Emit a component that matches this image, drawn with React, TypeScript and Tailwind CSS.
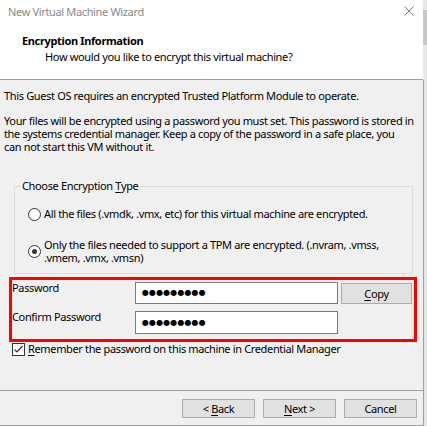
import React from "react";

const Btn = ({ children }: { children: React.ReactNode }) => (
  <div className="w-[73px] h-[19px] flex items-center justify-center bg-[#e1e1e1] border border-[#adadad] leading-none">
    <span>{children}</span>
  </div>
);

const Dots = () => (
  <span className="pl-[6px] font-['DejaVu_Sans'] text-[8px] tracking-[0.1px] leading-none">●●●●●●●●●</span>
);

export default function App() {
  return (
    <div className="w-[427px] h-[426px] flex bg-[#f0f0f0] text-black text-[11px] tracking-[-0.35px] font-['Noto_Sans',sans-serif] overflow-hidden">
      <div className="w-[423px] flex flex-col">
        {/* header */}
        <div className="h-[80px] bg-white border-b border-[#a0a0a0] flex flex-col">
          <div className="h-[24px] flex items-center justify-between pl-[8px] pr-[9px]">
            <span className="text-[#8a8a8a]">New Virtual Machine Wizard</span>
            <svg width="10" height="10" viewBox="0 0 10 10" className="mt-[-2px]">
              <path d="M0.5 0.5 L9.5 9.5 M9.5 0.5 L0.5 9.5" stroke="#777" strokeWidth="1" fill="none" />
            </svg>
          </div>
          <div className="mt-[9px] pl-[22px] leading-[16px] font-bold">Encryption Information</div>
          <div className="pl-[45px] leading-[16px]">How would you like to encrypt this virtual machine?</div>
        </div>

        {/* body */}
        <div className="mt-[8px] pl-[4px] leading-[16px]">This Guest OS requires an encrypted Trusted Platform Module to operate.</div>
        <div className="mt-[10px] pl-[4px] leading-[13px] whitespace-nowrap">
          Your files will be encrypted using a password you must set. This password is stored in
          <br />
          the systems credential manager. Keep a copy of the password in a safe place, you
          <br />
          can not start this VM without it.
        </div>

        <fieldset className="mt-[25px] ml-[14px] w-[399px] border border-[#dcdcdc] pb-[9px]">
          <legend className="ml-[5px] px-[2px] leading-[16px]">
            Choose Encryption <u className="underline-offset-2">T</u>ype
          </legend>
          <div className="mt-[12px] pl-[13px] flex items-center gap-[3px] leading-[16px]">
            <span className="w-[13px] h-[13px] rounded-full border border-[#333] bg-white shrink-0" />
            <span>All the files (.vmdk, .vmx, etc) for this virtual machine are encrypted.</span>
          </div>
          <div className="mt-[16px] pl-[13px] flex items-center gap-[3px] leading-[13px]">
            <span className="w-[13px] h-[13px] rounded-full border border-[#333] bg-white shrink-0 flex items-center justify-center">
              <span className="w-[5px] h-[5px] rounded-full bg-[#333]" />
            </span>
            <span className="pr-[20px]">Only the files needed to support a TPM are encrypted. (.nvram, .vmss, .vmem, .vmx, .vmsn)</span>
          </div>
        </fieldset>

        {/* highlighted password fields */}
        <div className="mt-[3px] ml-[9px] w-[408px] h-[65px] border-[3px] border-[#ff0000] flex flex-col">
          <div className="flex items-start leading-[16px]">
            <div className="w-[123px]">Password</div>
            <div className="mt-[2px] w-[203px] h-[22px] bg-white border border-[#7a7a7a] flex items-center">
              <Dots />
            </div>
            <div className="ml-[3px] mt-[3px] w-[71px] h-[21px] bg-[#e1e1e1] border border-[#adadad] flex items-center justify-center">
              <span><u className="underline-offset-2">C</u>opy</span>
            </div>
          </div>
          <div className="mt-[5px] flex items-start leading-[16px]">
            <div className="w-[123px]">Confirm Password</div>
            <div className="mt-[2px] w-[203px] h-[23px] bg-white border border-[#7a7a7a] flex items-center">
              <Dots />
            </div>
          </div>
        </div>

        <div className="ml-[12px] h-[14px] flex items-center gap-[3px]">
          <span className="w-[13px] h-[13px] border border-[#333] bg-white flex items-center justify-center shrink-0">
            <svg width="11" height="11" viewBox="0 0 11 11">
              <path d="M1.5 5.5 L4 8 L9.5 2" stroke="#333" strokeWidth="1.2" fill="none" />
            </svg>
          </span>
          <span className="leading-[16px]">
            <u className="underline-offset-2">R</u>emember the password on this machine in Credential Manager
          </span>
        </div>

        <div className="flex-1" />

        {/* buttons */}
        <div className="h-[36px] border-t border-b border-[#a0a0a0] pt-[8px] pr-[6px] flex justify-end gap-[8px]">
          <Btn>&lt;&nbsp;<u className="underline-offset-2">B</u>ack</Btn>
          <Btn><u className="underline-offset-2">N</u>ext &gt;</Btn>
          <Btn>Cancel</Btn>
        </div>
      </div>

      {/* window edge */}
      <div className="w-[4px] flex flex-col">
        <div className="h-[80px] bg-[#e8e8e8] pt-[10px]">
          <div className="h-[35px] bg-[#c8c8c8]" />
        </div>
        <div className="flex-1 border-l border-[#a0a0a0] bg-[#e6e6e6]" />
      </div>
    </div>
  );
}
